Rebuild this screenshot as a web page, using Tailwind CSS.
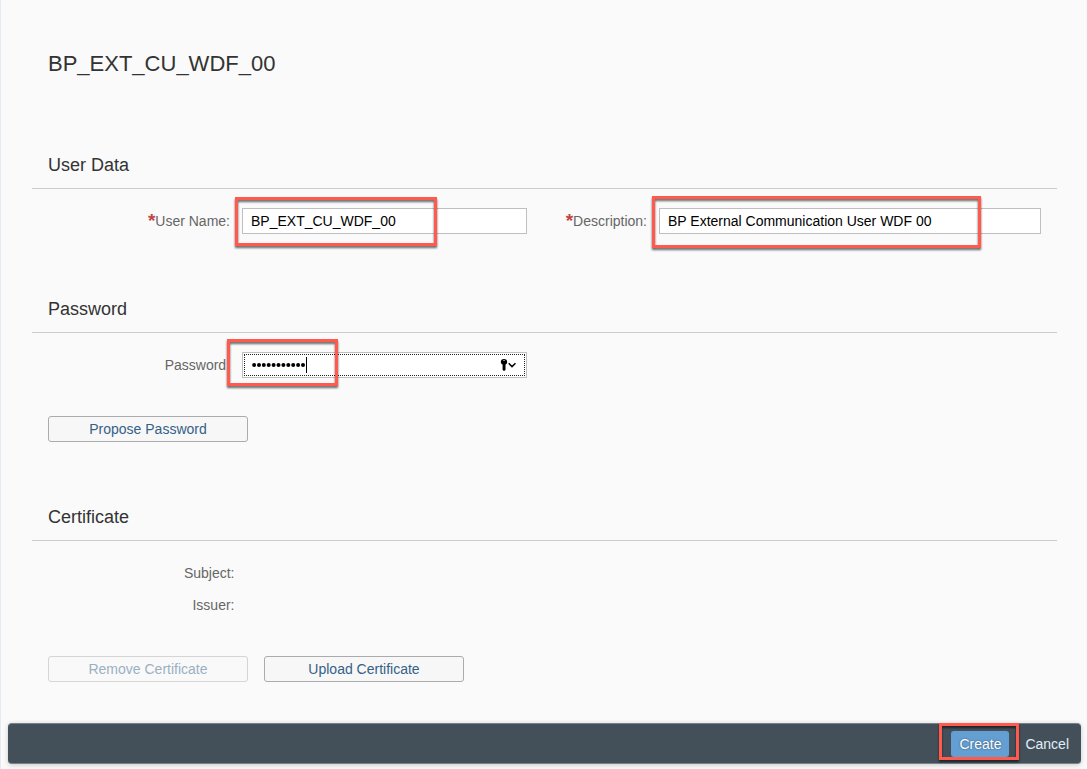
<!DOCTYPE html>
<html lang="en">
<head>
<meta charset="utf-8">
<title>BP_EXT_CU_WDF_00</title>
<script src="https://cdn.jsdelivr.net/npm/@tailwindcss/browser@4"></script>
</head>
<body class="relative flex h-[769px] w-[1087px] flex-col overflow-hidden border-l border-[#e6eaf3] bg-[#fafafa] font-['Liberation_Sans',Arial,sans-serif] text-sm text-[#666]">
<main class="flex h-[723px] flex-col pl-[31px] pr-[30px]">
  <h1 class="mt-12 h-8 pl-4 text-[22px] leading-8 text-[#333]">BP_EXT_CU_WDF_00</h1>

  <section class="mt-[61px] h-36">
    <h2 class="h-12 border-b border-[#ccc] pl-4 text-lg leading-[48px] text-[#333]">User Data</h2>
    <div class="flex pt-[19px] leading-[26px]">
      <label class="w-[198px] text-right"><span class="relative top-px text-[19px] font-bold leading-none text-[#c14646]">*</span>User Name:</label>
      <div class="ml-3 h-[26px] w-[285px] border border-[#bfbfbf] bg-white pl-2 leading-6 text-black">BP_EXT_CU_WDF_00</div>
      <label class="w-[120px] text-right"><span class="relative top-px text-[19px] font-bold leading-none text-[#c14646]">*</span>Description:</label>
      <div class="ml-3 h-[26px] w-[382px] border border-[#bfbfbf] bg-white pl-2 leading-6 text-black">BP External Communication User WDF 00</div>
    </div>
  </section>

  <section class="h-52">
    <h2 class="h-12 border-b border-[#ccc] pl-4 text-lg leading-[48px] text-[#333]">Password</h2>
    <div class="flex pt-[19px] leading-[26px]">
      <label class="w-[198px] text-right">Password:</label>
      <div class="ml-3 h-[26px] w-[285px] border border-[#bfbfbf] bg-white p-px">
        <div class="flex h-[22px] items-center border border-dotted border-[#222] pl-[7px] pr-2">
          <svg class="h-4 w-14" viewBox="0 0 56 16"><g fill="#000"><circle cx="2.1" cy="8" r="2"/><circle cx="7" cy="8" r="2"/><circle cx="11.8" cy="8" r="2"/><circle cx="16.7" cy="8" r="2"/><circle cx="21.6" cy="8" r="2"/><circle cx="26.5" cy="8" r="2"/><circle cx="31.4" cy="8" r="2"/><circle cx="36.3" cy="8" r="2"/><circle cx="41.2" cy="8" r="2"/><circle cx="46.1" cy="8" r="2"/><circle cx="51" cy="8" r="2"/></g><path d="M54.5 0v16" stroke="#000"/></svg>
          <svg class="ml-auto h-4 w-4" viewBox="0 0 16 16"><path fill="#000" fill-rule="evenodd" d="M4 2C1.900 2 .8 3.300 .8 4.900C.8 6.100 1.500 7 2.600 7.500V12.900L4 14L5.500 12.900V7.500C6.600 7 7.200 6.100 7.200 4.900C7.200 3.300 6 2 4 2ZM3.300 3.200H4.700V4H3.300Z"/><path d="M8.700 6.300L12 9.600L15.500 6.300" fill="none" stroke="#000" stroke-width="1.500"/></svg>
        </div>
      </div>
    </div>
    <button class="ml-4 mt-[38px] block h-[26px] w-[200px] rounded-[3px] border border-[#ababab] bg-[#f7f7f7] leading-6 text-[#346187]">Propose Password</button>
  </section>

  <section>
    <h2 class="h-12 border-b border-[#ccc] pl-4 text-lg leading-[48px] text-[#333]">Certificate</h2>
    <div class="flex w-[202.5px] flex-col pt-[16px] text-right leading-8">
      <span>Subject:</span>
      <span>Issuer:</span>
    </div>
    <div class="ml-4 mt-[35px] flex gap-4">
      <button class="h-[26px] w-[200px] rounded-[3px] border border-[#d5d5d5] bg-[#f9f9f9] leading-6 text-[#99b0c3]">Remove Certificate</button>
      <button class="h-[26px] w-[200px] rounded-[3px] border border-[#ababab] bg-[#f7f7f7] leading-6 text-[#346187]">Upload Certificate</button>
    </div>
  </section>
</main>

<footer class="ml-[7px] flex h-[41px] w-[1073px] shrink-0 items-center justify-end rounded border-y border-t-[#79828a] border-b-[#79828a] bg-[#445059] pr-3 text-white shadow-[0_1px_5px_rgba(0,0,0,0.2)]">
  <button class="h-[26px] w-[58px] rounded-[3px] bg-[#649fd3] leading-[26px] [text-shadow:0_0_2px_rgba(0,0,0,0.5)]">Create</button>
  <button class="ml-4 text-[#e1eefa]">Cancel</button>
</footer>

<div class="absolute left-[234px] top-[197px] h-[49px] w-[202px] border-[3px] border-[#ff5a4d] [filter:drop-shadow(0_2px_1px_rgba(0,0,0,0.6))]"></div>
<div class="absolute left-[651px] top-[196px] h-[52px] w-[329px] border-[3px] border-[#ff5a4d] [filter:drop-shadow(0_2px_1px_rgba(0,0,0,0.6))]"></div>
<div class="absolute left-[226px] top-[339px] h-[47px] w-[111px] border-[3px] border-[#ff5a4d] [filter:drop-shadow(0_2px_1px_rgba(0,0,0,0.6))]"></div>
<div class="absolute left-[938px] top-[723px] h-[37px] w-[80px] border-[3px] border-[#ff5a4d] [filter:drop-shadow(0_2px_1px_rgba(0,0,0,0.6))]"></div>
</body>
</html>
